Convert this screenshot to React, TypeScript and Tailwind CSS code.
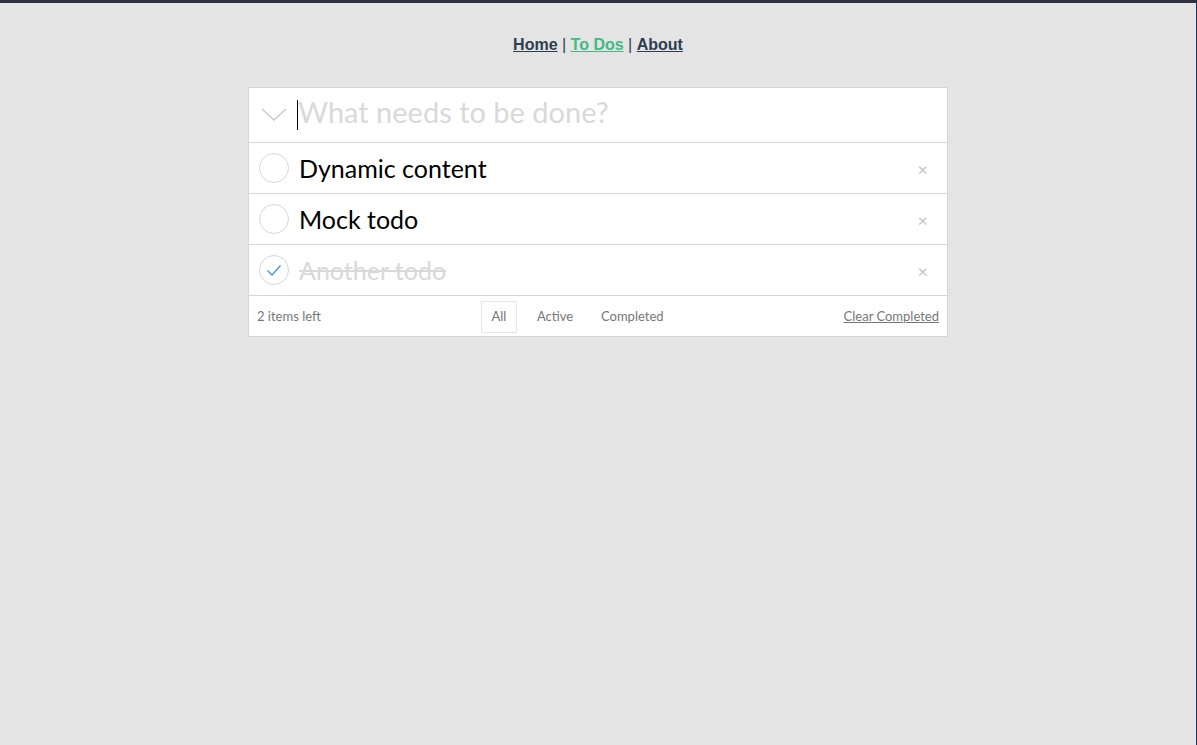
import React from "react";

const sans = { fontFamily: '"Lato", "Open Sans", sans-serif' };

function Circle({ done }: { done?: boolean }) {
  return (
    <svg width="32" height="32" viewBox="0 0 32 32" className="shrink-0">
      <circle cx="16" cy="16" r="14.5" fill="none" stroke="#d6d6d6" strokeWidth="1" />
      {done && (
        <path d="M9.5 16.5 L14 21 L22.5 11.5" fill="none" stroke="#3c9be8" strokeWidth="1.4" />
      )}
    </svg>
  );
}

function Row({ text, done }: { text: string; done?: boolean }) {
  return (
    <div className="flex items-center h-[51px] border-b border-[#d6d6d6] pl-[9px] pr-[19px]">
      <Circle done={done} />
      <span
        className={
          "ml-[9px] flex-1 text-[25px] leading-none " +
          (done ? "line-through text-[#d9d9d9]" : "text-black")
        }
        style={sans}
      >
        {text}
      </span>
      <span className="text-[#c4c4c4] text-[18px] leading-none mt-[2px]" style={sans}>
        ×
      </span>
    </div>
  );
}

export default function App() {
  return (
    <div className="min-h-[745px] bg-[#e4e4e4] border-t-[3px] border-[#2d3142] border-r border-r-[#1f3266]">
      <nav
        className="pt-[28px] pb-[28px] text-center text-[16px] font-bold text-[#2c3e50] leading-[28px]"
        style={{ fontFamily: '"Liberation Sans", Arial, sans-serif' }}
      >
        <a className="underline text-[#2c3e50]">Home</a>
        <span className="font-normal"> | </span>
        <a className="underline text-[#42b983]">To Dos</a>
        <span className="font-normal"> | </span>
        <a className="underline text-[#2c3e50]">About</a>
      </nav>
      <div className="mx-auto w-[700px] bg-white border border-[#d6d6d6]">
        <div className="flex items-center h-[55px] border-b border-[#d6d6d6] pl-[12px]">
          <svg width="26" height="16" viewBox="0 0 26 16" className="shrink-0 mb-[2px]">
            <path d="M1 3 L13 14 L25 3" fill="none" stroke="#c8c8c8" strokeWidth="1.3" />
          </svg>
          <div className="ml-[10px] flex items-center">
            <span className="w-px h-[30px] bg-black"></span>
            <span className="text-[29px] text-[#d9d9d9] leading-none pb-[7px]" style={sans}>
              What needs to be done?
            </span>
          </div>
        </div>
        <Row text="Dynamic content" />
        <Row text="Mock todo" />
        <Row text="Another todo" done />
        <div
          className="flex items-center h-[40px] px-[8px] pt-[2px] text-[13px] text-[#777]"
          style={sans}
        >
          <span className="flex-1">2 items left</span>
          <div className="flex items-center gap-[10px] mr-[170px]">
            <span className="w-[36px] text-center border border-[#e6e6e6] py-[5px]">All</span>
            <span className="w-[54px] border border-transparent pl-[9px] py-[5px]">Active</span>
            <span className="border border-transparent px-[9px] py-[5px]">Completed</span>
          </div>
          <span className="underline">Clear Completed</span>
        </div>
      </div>
    </div>
  );
}
